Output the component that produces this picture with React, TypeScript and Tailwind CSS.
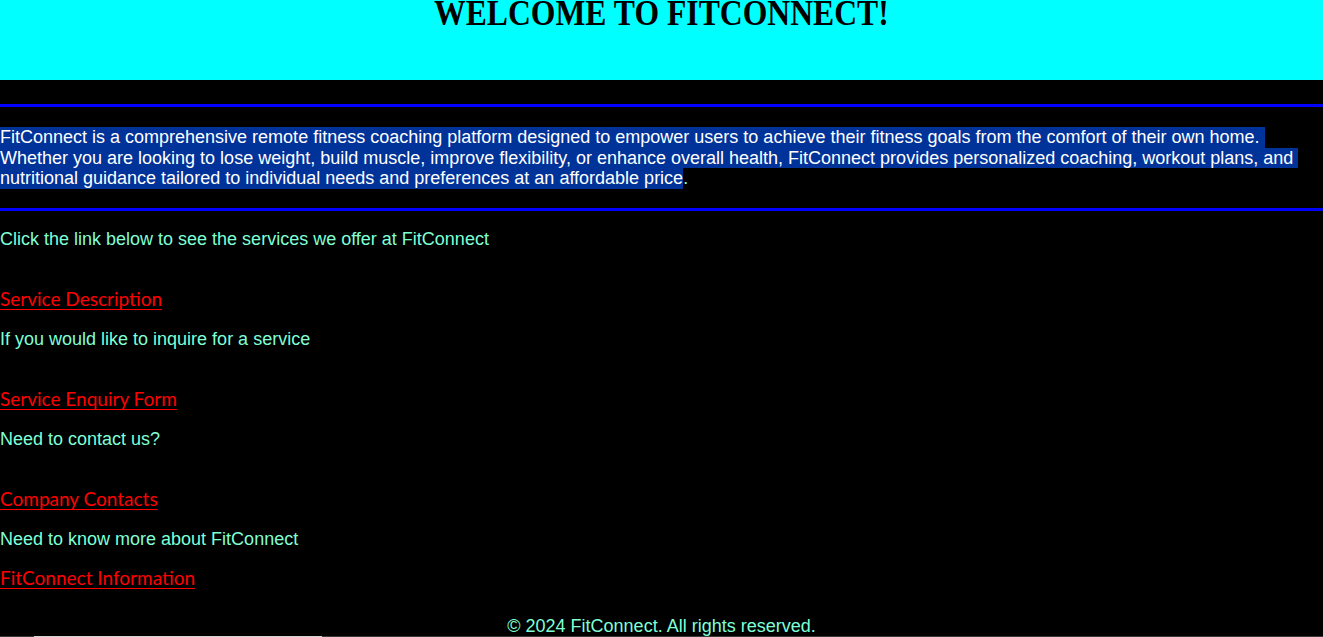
import React from 'react';

const PARA = [
  'FitConnect is a comprehensive remote fitness coaching platform designed to empower users to achieve their fitness goals from the comfort of their own home.',
  'Whether you are looking to lose weight, build muscle, improve flexibility, or enhance overall health, FitConnect provides personalized coaching, workout plans, and',
  'nutritional guidance tailored to individual needs and preferences at an affordable price',
];

const SECTIONS = [
  { intro: 'Click the link below to see the services we offer at FitConnect', link: 'Service Description', gap: 'mt-[40px]' },
  { intro: 'If you would like to inquire for a service', link: 'Service Enquiry Form', gap: 'mt-[40px]' },
  { intro: 'Need to contact us?', link: 'Company Contacts', gap: 'mt-[40px]' },
  { intro: 'Need to know more about FitConnect', link: 'FitConnect Information', gap: 'mt-[19px]' },
];

export default function App() {
  return (
    <div className="h-[637px] bg-black text-[#7fffd4] font-['Liberation_Sans',Arial,sans-serif] text-[18px] overflow-hidden">
      <header className="h-[80px] bg-[#00ffff] flex justify-center">
        <h1 className="-mt-[5px] h-[36px] text-[36px] leading-none font-bold text-black font-['Liberation_Serif',serif] scale-x-[0.88] whitespace-nowrap">
          WELCOME TO FITCONNECT!
        </h1>
      </header>

      <div className="mt-[24px] h-[3px] bg-[#0000ff]" />

      {/* about */}
      <div className="mt-[20px] h-[62px] leading-[20.7px]">
        {PARA.map((line, i) => {
          const last = i === PARA.length - 1;
          return (
            <div key={i} className="whitespace-nowrap">
              <span className={`inline-block bg-[#003399] text-white ${last ? '' : 'pr-[5px]'}`}>{line}</span>
              {last && <span>.</span>}
            </div>
          );
        })}
      </div>

      <div className="mt-[19px] h-[3px] bg-[#0000ff]" />

      <main className="leading-[20px]">
        {SECTIONS.map((s, i) => (
          <div key={s.link}>
            <p className={i === 0 ? 'mt-[18px]' : 'mt-[20px]'}>{s.intro}</p>
            <a
              href="#"
              className={`${s.gap} block w-fit h-[20px] leading-[20px] text-[19px] text-[#ff0000] underline underline-offset-[3px] font-['Lato','Open_Sans',sans-serif]`}
            >
              {s.link}
            </a>
          </div>
        ))}
      </main>

      <footer className="mt-[29px] h-[19px] leading-[19px] text-center">
        © 2024 FitConnect. All rights reserved.
      </footer>
      <div className="flex h-[1px]">
        <div className="w-[34px] bg-[#3a3a3a]" />
        <div className="w-[288px] bg-[#d4d4d4]" />
        <div className="flex-1 bg-[#3a3a3a]" />
      </div>
    </div>
  );
}
